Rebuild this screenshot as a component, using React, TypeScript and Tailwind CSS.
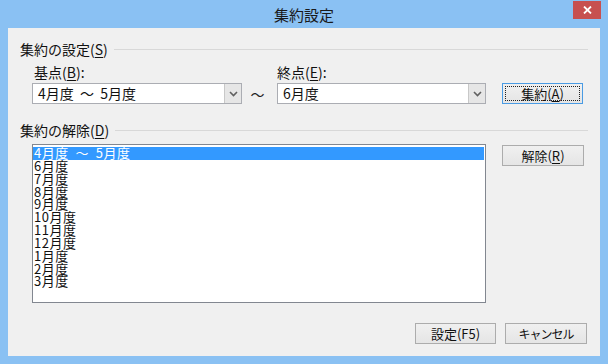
const font = "font-['Noto_Sans_CJK_JP','Noto_Sans',sans-serif]";

const items = [
  "4月度  ～  5月度",
  "6月度",
  "7月度",
  "8月度",
  "9月度",
  "10月度",
  "11月度",
  "12月度",
  "1月度",
  "2月度",
  "3月度",
];

function Chevron() {
  return (
    <svg width="9" height="6" viewBox="0 0 9 6">
      <polyline
        points="1,1 4.5,4.5 8,1"
        fill="none"
        stroke="#606060"
        strokeWidth="1.6"
      />
    </svg>
  );
}

function Combo({ value, width }: { value: string; width: string }) {
  return (
    <div
      className={`${width} flex h-[21px] border border-[#ABADB3] bg-white`}
    >
      <div className="flex-1 pl-[5px] text-[14px] leading-[19px] whitespace-pre text-[#111]">
        {value}
      </div>
      <div className="flex w-[17px] items-center justify-center border-l border-[#C8C8C8] bg-[#E6E6E6]">
        <Chevron />
      </div>
    </div>
  );
}

function Btn({
  children,
  width,
  primary,
  className = "",
}: {
  children: React.ReactNode;
  width: string;
  primary?: boolean;
  className?: string;
}) {
  return (
    <div
      className={`${width} h-[21px] ${
        primary ? "border-[#4A9BE3]" : "border-[#ACACAC]"
      } flex items-center justify-center border bg-gradient-to-b from-[#F0F0F0] to-[#E5E5E5] text-[13px] text-[#111] ${className}`}
    >
      {primary ? (
        <div className="m-[2px] flex h-[15px] flex-1 items-center justify-center border border-dotted border-[#222]">
          {children}
        </div>
      ) : (
        children
      )}
    </div>
  );
}

function GroupHeader({ children }: { children: React.ReactNode }) {
  return (
    <div className="flex h-[16px] items-center">
      <span className="text-[14px] leading-[16px] text-[#111]">{children}</span>
      <div className="ml-[6px] h-px flex-1 bg-[#D8D8D8]" />
    </div>
  );
}

export default function App() {
  return (
    <div
      className={`${font} flex h-[364px] w-[608px] flex-col bg-[#8AC1F3]`}
    >
      {/* title bar */}
      <div className="flex h-[28px]">
        <div className="flex-1" />
        <div className="pt-[5px] text-[15px] leading-[20px] text-[#1a1a1a]">
          集約設定
        </div>
        <div className="flex flex-1 justify-end">
          <div className="mt-[1px] mr-[7px] flex h-[18px] w-[28px] items-center justify-center bg-[#C75050]">
            <svg width="9" height="8" viewBox="0 0 9 8">
              <path
                d="M1 0.5 L8 7.5 M8 0.5 L1 7.5"
                stroke="white"
                strokeWidth="1.8"
              />
            </svg>
          </div>
        </div>
      </div>

      {/* client */}
      <div className="mx-[8px] flex h-[328px] w-[592px] flex-col bg-[#F0F0F0] pt-[13px] pr-[12px] pl-[12px]">
        <GroupHeader>
          集約の設定(<u className="underline-offset-2">S</u>)
        </GroupHeader>

        <div className="mt-[7px] flex h-[16px] text-[14px] leading-[16px] text-[#111]">
          <span className="ml-[14px] w-[243px]">
            基点(<u className="underline-offset-2">B</u>):
          </span>
          <span>
            終点(<u className="underline-offset-2">E</u>):
          </span>
        </div>

        <div className="mt-[3px] ml-[12px] flex h-[21px] items-center">
          <Combo value={"4月度  ～  5月度"} width="w-[210px]" />
          <span className="w-[35px] pr-[4px] text-center text-[14px] leading-[16px] text-[#222]">
            ～
          </span>
          <Combo value="6月度" width="w-[209px]" />
          <Btn width="w-[81px]" primary className="ml-[16px] h-[20px]">
            集約(<u className="underline-offset-2">A</u>)
          </Btn>
        </div>

        <div className="mt-[18px]">
          <GroupHeader>
            集約の解除(<u className="underline-offset-2">D</u>)
          </GroupHeader>
        </div>

        <div className="mt-[6px] flex items-start">
          <div className="ml-[12px] h-[159px] w-[454px] border border-[#828790] bg-white pt-[2px] pr-px">
            {items.map((it, i) => (
              <div
                key={i}
                className={`h-[12.85px] pl-[1px] text-[13px] leading-[12.85px] tracking-[0.5px] whitespace-pre ${
                  i === 0 ? "bg-[#3399FF] text-white" : "text-[#111]"
                }`}
              >
                {it}
              </div>
            ))}
          </div>
          <Btn width="w-[82px]" className="mt-[1px] ml-[16px]">
            解除(<u className="underline-offset-2">R</u>)
          </Btn>
        </div>

        <div className="mt-[20px] mr-[1px] flex justify-end gap-[9px]">
          <Btn width="w-[81px]" className="h-[20px]">
            設定(F5)
          </Btn>
          <Btn width="w-[82px]" className="h-[20px]">
            <span className="text-[12px] tracking-[-1px]">キャンセル</span>
          </Btn>
        </div>
      </div>
    </div>
  );
}
